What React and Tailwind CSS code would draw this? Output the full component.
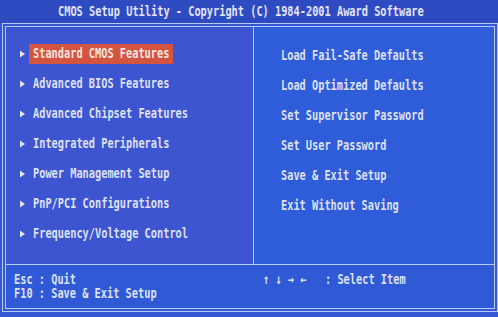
import React from "react";

const left = [
  "Standard CMOS Features",
  "Advanced BIOS Features",
  "Advanced Chipset Features",
  "Integrated Peripherals",
  "Power Management Setup",
  "PnP/PCI Configurations",
  "Frequency/Voltage Control",
];
const right = [
  "Load Fail-Safe Defaults",
  "Load Optimized Defaults",
  "Set Supervisor Password",
  "Set User Password",
  "Save & Exit Setup",
  "Exit Without Saving",
];

function T({ children, className = "" }) {
  return (
    <span className={"inline-block whitespace-pre scale-y-[1.35] leading-none " + className}>
      {children}
    </span>
  );
}

function Tri() {
  return (
    <svg width="9" height="8" viewBox="0 0 9 8" className="shrink-0">
      <path d="M0 0.5 L5 4 L0 7.5 Z" fill="#dfe3f4" />
    </svg>
  );
}

export default function App() {
  return (
    <div className="w-[498px] h-[317px] overflow-hidden bg-[#3658d4] font-['DejaVu_Sans_Mono',monospace] font-bold text-[10.3px] text-[#dde1f3] flex flex-col">
      <div className="h-[23px] shrink-0 bg-[#2f4bc2] pl-[58px] flex items-center text-[#e2e5f6]">
        <T>CMOS Setup Utility - Copyright (C) 1984-2001 Award Software</T>
      </div>
      <div className="ml-[2px] w-[496px] h-[289px] border border-[#b4ccf2] p-[2px]">
        <div className="h-full border border-[#b4ccf2] flex flex-col">
          <div className="h-[237px] flex">
            <div className="w-[248px] border-r border-[#b4ccf2] pt-[12px] bg-[#3d55d0]">
              {left.map((t, i) => (
                <div key={t} className="h-[30px] pl-[14px] flex items-center">
                  <Tri />
                  <span className={"px-[4px] py-[2px] " + (i === 0 ? "bg-[#d4553f] text-[#f6e6e2]" : "")}>
                    <T>{t}</T>
                  </span>
                </div>
              ))}
            </div>
            <div className="flex-1 pt-[13px] pl-[27px] bg-[#2f5cd8]">
              {right.map((t) => (
                <div key={t} className="h-[30px] flex items-center">
                  <T>{t}</T>
                </div>
              ))}
            </div>
          </div>
          <div className="flex-1 border-t border-[#b4ccf2] flex pt-[7px] bg-[#3059d6]">
            <div className="w-[249px] pl-[8px] flex flex-col">
              <div className="h-[14px] flex items-center"><T className="scale-y-[1.25]">Esc : Quit</T></div>
              <div className="h-[14px] flex items-center"><T className="scale-y-[1.25]">F10 : Save &amp; Exit Setup</T></div>
            </div>
            <div className="pl-[8px]">
              <div className="h-[14px] flex items-center"><T className="scale-y-[1.25]">{"↑ ↓ → ←   : Select Item"}</T></div>
            </div>
          </div>
        </div>
      </div>
    </div>
  );
}
